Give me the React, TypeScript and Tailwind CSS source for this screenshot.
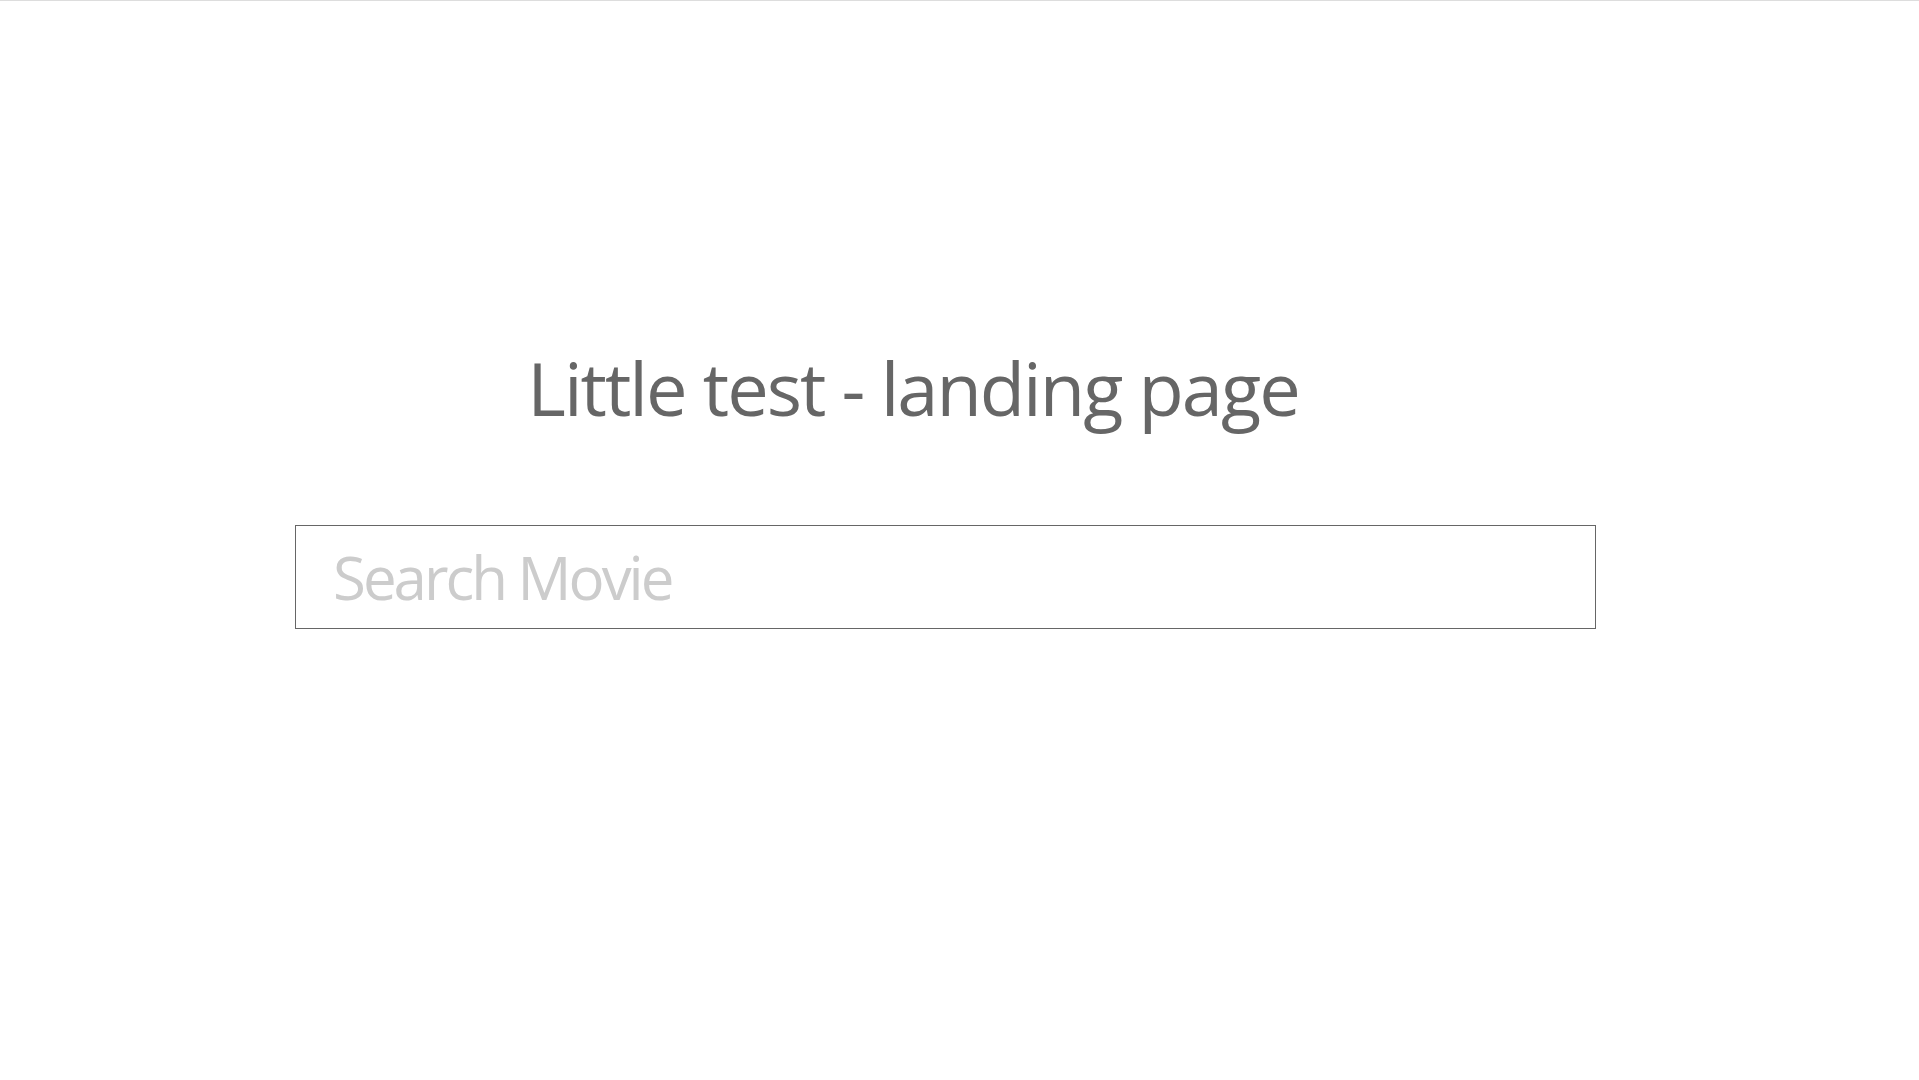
export default function App() {
  return (
    <div className="min-h-screen w-full bg-white border-t border-[#dddddd] font-['Open_Sans',sans-serif]">
      <h1 className="mt-[350px] pr-[93px] text-center text-[74px] leading-none font-normal tracking-[-2px] text-[#666666]">
        Little test - landing page
      </h1>
      <div className="mt-[100px] pl-[295px]">
        <input
          type="text"
          placeholder="Search Movie"
          className="w-[1301px] h-[104px] border border-[#666666] pl-[37px] text-[60px] tracking-[-3px] text-[#666666] placeholder:text-[#cccccc] outline-none"
        />
      </div>
    </div>
  );
}
